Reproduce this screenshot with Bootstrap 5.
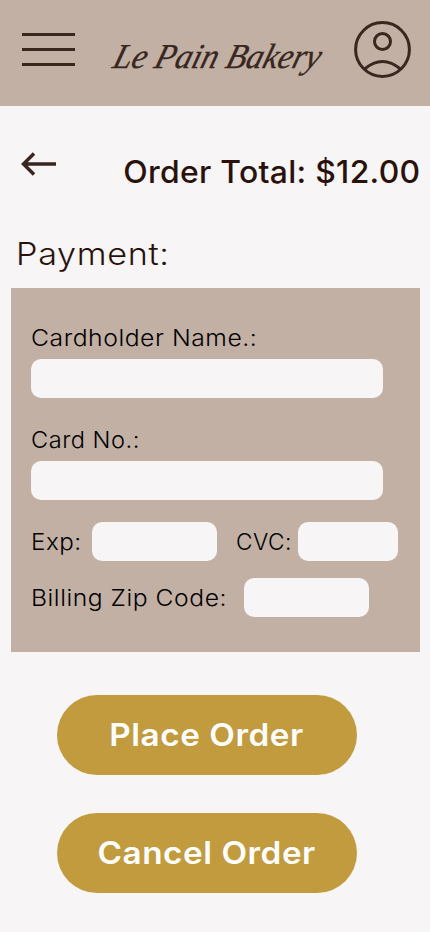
<!DOCTYPE html>
<html lang="en">
<head>
<meta charset="utf-8">
<meta name="viewport" content="width=device-width, initial-scale=1">
<title>Le Pain Bakery</title>
<link rel="stylesheet" href="https://cdn.jsdelivr.net/npm/bootstrap@5.3.0/dist/css/bootstrap.min.css">
<style>
body{background:#f7f5f6;color:#2a120b;font-family:Inter,"Open Sans",sans-serif;min-height:932px}
.topbar{height:106px;background:#c2b0a4;padding:0 19px 7px 22px}
.brand-name{font-family:"Liberation Serif",serif;font-style:italic;font-size:35px;line-height:48px;color:#38261f;-webkit-text-stroke:.3px #38261f;white-space:nowrap;margin:14px 0 0 6px;transform:skewX(-16deg) scaleX(.95)}
.total-row{height:68px;margin-top:31px;padding:0 10px 0 21px}
.back-btn{margin-bottom:15px}
.order-total{font-size:31px;font-weight:500;line-height:40px;letter-spacing:.3px;white-space:nowrap;padding-top:1px;transform:scaleX(1.027);transform-origin:right}
.section-title{font-size:31px;font-weight:350;line-height:40px;margin:29px 0 0 16px;width:140px;height:54px;letter-spacing:.6px;transform:scaleX(1.103);transform-origin:left}
.pay-panel{width:409px;height:364px;margin-left:11px;background:#c2b0a4;padding:32px 20px 0;color:#000}
.field-label{font-size:23px;font-weight:350;line-height:37px;margin-bottom:2px;white-space:nowrap;letter-spacing:.5px;transform-origin:left}
.field-box{height:39px;border-radius:10px;background:#f7f5f6}
.field-box:focus{background:#f7f5f6}
.w-long{width:352px}.w-mid{width:125px}.w-short{width:100px}
.field-row{margin-top:22px}
.field-row+.field-row{margin-top:17px}
.field-row .field-label{margin-bottom:0;padding-top:2px}
.lab-holder{width:212px;transform:scaleX(1.075)}
.lab-number{width:110px;transform:scaleX(1.025)}
.field-row .lab-exp{width:61px;transform:scaleX(1.05)}
.field-row .lab-cvc{width:62px;margin-left:19px;transform:scaleX(.985)}
.field-row .lab-zip{width:213px;transform:scaleX(1.072)}
.btn-gold{--bs-btn-bg:#c19b3e;--bs-btn-color:#fff;--bs-btn-hover-bg:#b08c34;--bs-btn-hover-color:#fff;width:300px;height:80px;font-size:31px;font-weight:600;padding:0;border:0;letter-spacing:.5px}
.btn-gold span{display:inline-block;transform:scaleX(1.074)}
.actions{margin:43px 0 0 57px;gap:38px}
</style>
<script src="https://cdn.jsdelivr.net/npm/bootstrap@5.3.0/dist/js/bootstrap.bundle.min.js"></script>
</head>
<body>
<header class="topbar d-flex align-items-center justify-content-between">
  <a href="#" aria-label="Menu" class="d-block lh-1"><svg class="d-block" width="53" height="33" viewBox="0 0 53 33" stroke="#38261f" stroke-width="3"><path d="M0 1.5H53M0 16.5H53M0 31.5H53"/></svg></a>
  <div class="brand-name">Le Pain Bakery</div>
  <a href="#" aria-label="Account" class="d-block lh-1"><svg class="d-block" width="57" height="57" viewBox="0 0 57 57" fill="none" stroke="#38261f" stroke-width="3"><circle cx="28.5" cy="28.5" r="26.9"/><circle cx="28.5" cy="20.5" r="8"/><path d="M10.5 48Q28.5 33 46.5 48"/></svg></a>
</header>
<main>
  <div class="total-row d-flex align-items-center justify-content-between">
    <a href="#" aria-label="Back" class="back-btn d-block lh-1"><svg width="36" height="24" viewBox="0 0 36 24" fill="none" stroke="#38261f" stroke-width="3.5"><path d="M35 12H3M13 1.5L2.5 12L13 22.5"/></svg></a>
    <div class="order-total">Order Total: $12.00</div>
  </div>
  <h1 class="section-title mb-0">Payment:</h1>
  <form class="pay-panel">
    <label class="field-label lab-holder d-block" for="holder">Cardholder Name.:</label>
    <input id="holder" class="field-box form-control border-0 w-long mb-4">
    <label class="field-label lab-number d-block" for="number">Card No.:</label>
    <input id="number" class="field-box form-control border-0 w-long">
    <div class="field-row d-flex align-items-center">
      <label class="field-label lab-exp" for="exp">Exp:</label>
      <input id="exp" class="field-box form-control border-0 w-mid">
      <label class="field-label lab-cvc" for="cvc">CVC:</label>
      <input id="cvc" class="field-box form-control border-0 w-short">
    </div>
    <div class="field-row d-flex align-items-center">
      <label class="field-label lab-zip" for="zip">Billing Zip Code:</label>
      <input id="zip" class="field-box form-control border-0 w-mid">
    </div>
  </form>
  <div class="actions d-flex flex-column">
    <button class="btn btn-gold rounded-pill" type="button"><span>Place Order</span></button>
    <button class="btn btn-gold rounded-pill" type="button"><span>Cancel Order</span></button>
  </div>
</main>
</body>
</html>
